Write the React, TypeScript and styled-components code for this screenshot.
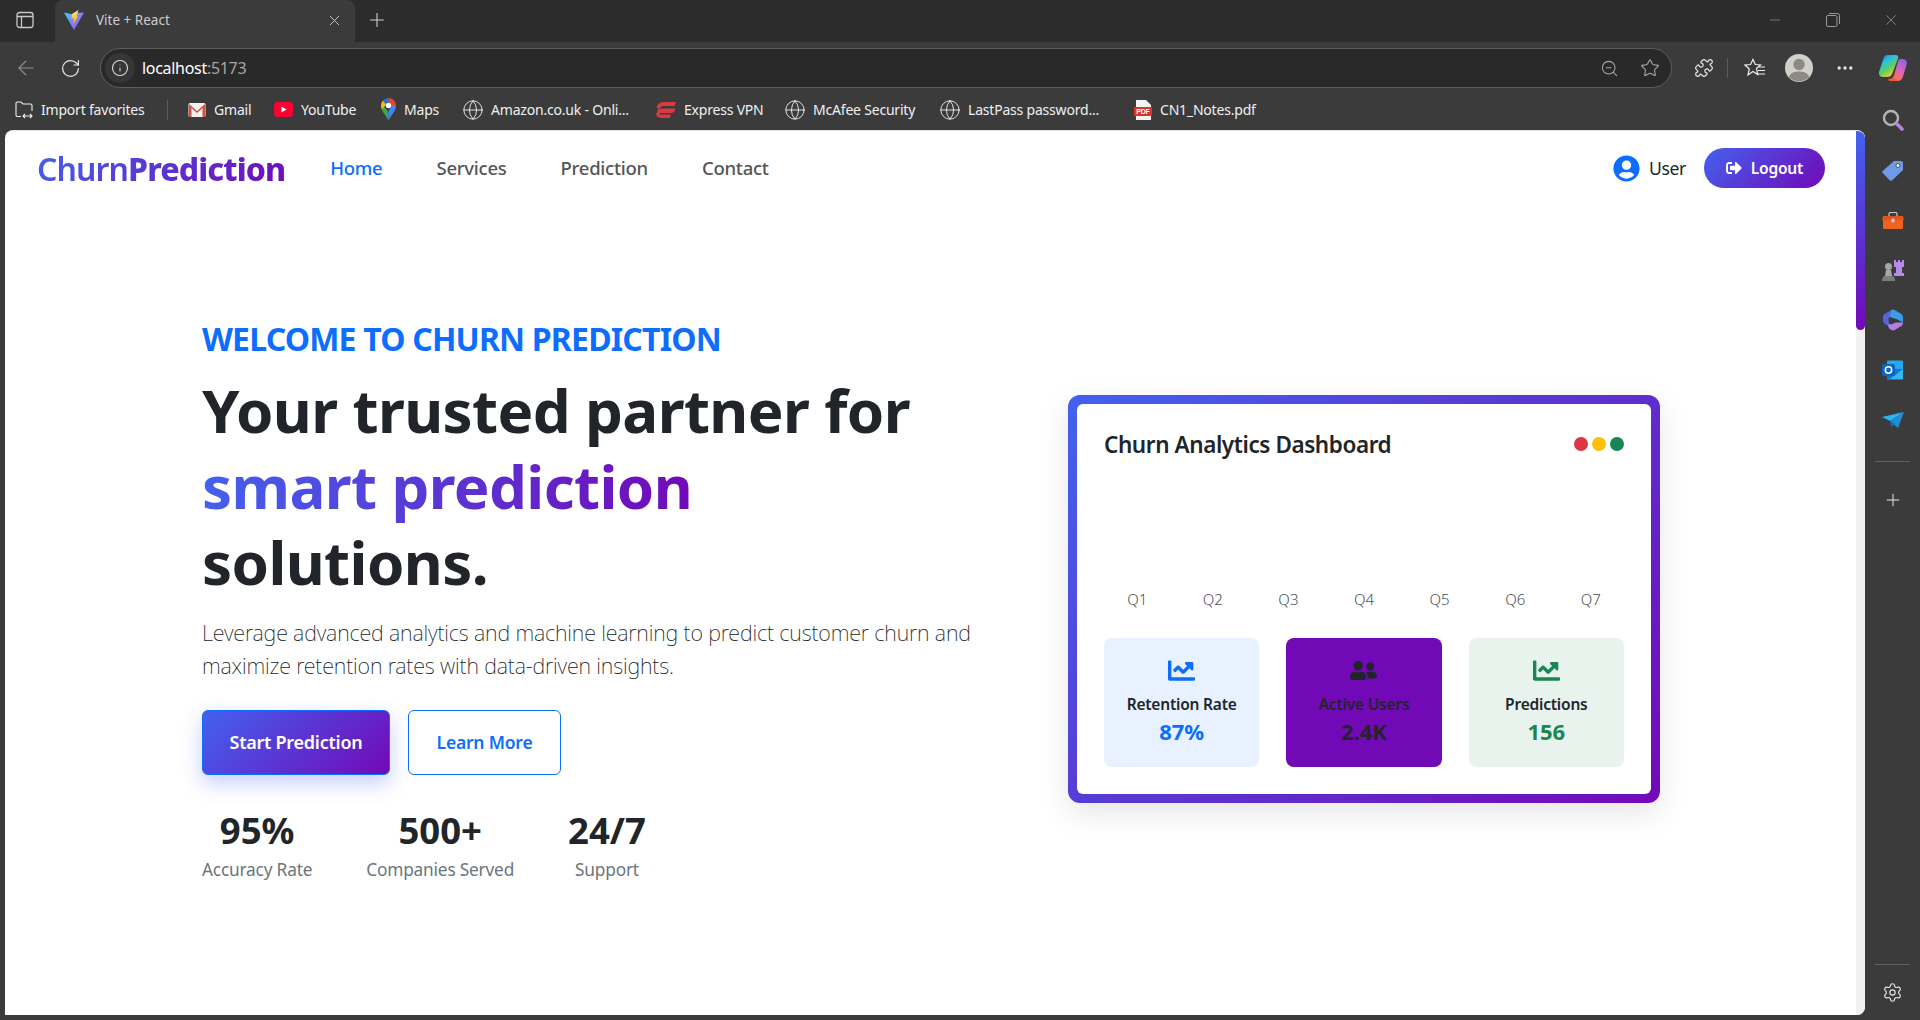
import React, { FC } from "react";
import styled, { createGlobalStyle } from "styled-components";
import {
  ArrowLeft,
  Globe,
  Info,
  Minus,
  MoreHorizontal,
  Plus,
  Puzzle,
  RotateCw,
  Settings,
  Star,
  X,
  ZoomOut,
} from "lucide-react";
import { FaChartLine, FaSignOutAlt, FaUserCircle, FaUserFriends } from "react-icons/fa";

const GRADIENT = "linear-gradient(135deg, #4361ee, #7209b7)";
const FONT = `"Noto Sans", "Open Sans", sans-serif`;

const GlobalStyle = createGlobalStyle`
  html, body {
    margin: 0;
    padding: 0;
    height: 100%;
    background: #3b3b3b;
    font-family: ${FONT};
    overflow: hidden;
  }
  * {
    box-sizing: border-box;
  }
`;

const Browser = styled("div")`
  width: 1920px;
  height: 1020px;
  display: flex;
  flex-direction: column;
  background: #3b3b3b;
`;

const TitleBar = styled("div")`
  height: 42px;
  display: flex;
  align-items: stretch;
  background: #2c2c2c;
  color: #cfcfcf;
`;

const TabToggle = styled("div")`
  width: 55px;
  display: flex;
  align-items: center;
  justify-content: center;
  padding: 0 5px 2px 0;
`;

const Tab = styled("div")`
  width: 300px;
  display: flex;
  align-items: center;
  padding: 0 12px 2px 9px;
  background: #3b3b3b;
  border-radius: 8px 8px 0 0;
  gap: 12px;
`;

const TabTitle = styled("span")`
  flex: 1;
  font-size: 13.5px;
  color: #cccccc;
`;

const NewTab = styled("div")`
  width: 44px;
  display: flex;
  align-items: center;
  justify-content: center;
  padding-bottom: 2px;
`;

const WindowControls = styled("div")`
  margin-left: auto;
  display: flex;
  align-items: center;
  padding-bottom: 2px;
  color: #9a9a9a;
`;

const WindowButton = styled("div")`
  width: 58px;
  display: flex;
  justify-content: center;
`;

const Below = styled("div")`
  flex: 1;
  display: flex;
  min-height: 0;
`;

const MainColumn = styled("div")`
  flex: 1;
  min-width: 0;
  display: flex;
  flex-direction: column;
  padding: 0 0 5px 5px;
`;

const Toolbar = styled("div")`
  height: 48px;
  margin-top: 2px;
  display: flex;
  align-items: center;
  color: #e6e6e6;
`;

const NavIcon = styled("div")<{ $w: number; $dim?: boolean }>`
  width: ${({ $w }) => $w}px;
  flex: none;
  display: flex;
  justify-content: center;
  color: ${({ $dim }) => ($dim ? "#8d8d8d" : "#e6e6e6")};
`;

const Address = styled("div")`
  flex: 1;
  height: 40px;
  margin: 0 22px 0 5px;
  border: 1px solid #5e5e5e;
  border-radius: 20px;
  background: #292929;
  display: flex;
  align-items: center;
  padding: 0 11px 0 4px;
`;

const InfoChip = styled("div")`
  width: 30px;
  height: 30px;
  border-radius: 50%;
  background: #363636;
  display: flex;
  align-items: center;
  justify-content: center;
  color: #dcdcdc;
  margin-right: 7px;
`;

const UrlHost = styled("span")`
  font-size: 16px;
  letter-spacing: -0.3px;
  color: #ffffff;
`;

const UrlPort = styled("span")`
  font-size: 16px;
  letter-spacing: -0.3px;
  color: #a5a5a5;
`;

const AddressEnd = styled("div")`
  margin-left: auto;
  display: flex;
  align-items: center;
  gap: 21px;
  color: #a8a8a8;
`;

const ToolGroup = styled("div")`
  width: 171px;
  flex: none;
  display: flex;
  align-items: center;
`;

const ToolSep = styled("div")`
  width: 1px;
  height: 20px;
  background: #5c5c5c;
  margin: 0 13px;
`;

const Bookmarks = styled("div")`
  height: 38px;
  display: flex;
  align-items: center;
  padding: 0 0 3px 10px;
`;

const Bookmark = styled("div")<{ $w: number }>`
  width: ${({ $w }) => $w}px;
  flex: none;
  display: flex;
  align-items: center;
  gap: 8px;
  font-size: 14px;
  letter-spacing: -0.2px;
  color: #f0f0f0;
  white-space: nowrap;
`;

const BookmarkGlobe = styled(Globe)`
  margin: -2px -1px -2px -2px;
`;

const BookmarkSep = styled("div")`
  width: 1px;
  height: 20px;
  background: #5c5c5c;
  position: relative;
  left: -20px;
`;

const Viewport = styled("div")`
  flex: 1;
  display: flex;
  min-height: 0;
  background: #ffffff;
  border-radius: 8px 8px 8px 0;
  overflow: hidden;
  border-top: 1px solid #e8e8e8;
`;

const Page = styled("div")`
  flex: 1;
  min-width: 0;
  color: #212529;
`;

const ScrollTrack = styled("div")`
  width: 9px;
  background: #f1f1f1;
`;

const ScrollThumb = styled("div")`
  height: 199px;
  border-radius: 0 0 5px 5px;
  background: linear-gradient(180deg, #4361ee, #7209b7);
`;

const NavBar = styled("div")`
  height: 74px;
  display: flex;
  align-items: center;
  padding: 0 31px 0 32px;
`;

const Logo = styled("div")`
  font-size: 32px;
  line-height: 40px;
  letter-spacing: -0.9px;
  background: ${GRADIENT};
  -webkit-background-clip: text;
  background-clip: text;
  -webkit-text-fill-color: transparent;
  font-weight: 600;
  margin: 2px 45px 0 0;
  & b {
    font-weight: 800;
  }
`;

const NavLinks = styled("div")`
  display: flex;
  gap: 54px;
  padding-bottom: 2px;
`;

const NavLink = styled("a")<{ $active?: boolean }>`
  font-size: 18.5px;
  font-weight: 500;
  letter-spacing: -0.25px;
  color: ${({ $active }) => ($active ? "#0d6efd" : "#555555")};
`;

const NavRight = styled("div")`
  margin-left: auto;
  display: flex;
  align-items: center;
`;

const UserBadge = styled("div")`
  display: flex;
  align-items: center;
  gap: 9px;
  font-size: 17.6px;
  letter-spacing: -0.4px;
  color: #212529;
  margin-right: 18px;
  & svg {
    color: #0d6efd;
  }
`;

const LogoutButton = styled("button")`
  width: 121px;
  height: 40px;
  border: 0;
  border-radius: 20px;
  background: ${GRADIENT};
  color: #ffffff;
  font: 600 15.5px ${FONT};
  letter-spacing: -0.2px;
  display: flex;
  align-items: center;
  justify-content: center;
  gap: 9px;
`;

const Hero = styled("section")`
  display: grid;
  grid-template-columns: 866px 592px;
  align-items: center;
  padding: 112px 0 0 197px;
`;

const Eyebrow = styled("div")`
  font-size: 32px;
  line-height: 43px;
  font-weight: 700;
  letter-spacing: -0.82px;
  color: #0d6efd;
  margin: 0 0 12px;
  white-space: nowrap;
`;

const Headline = styled("h1")`
  margin: 0 0 16px;
  font-size: 60px;
  line-height: 76px;
  font-weight: 700;
  letter-spacing: -0.6px;
  color: #212529;
  white-space: nowrap;
`;

const GradientWords = styled("span")`
  background: linear-gradient(90deg, #4361ee, #7209b7);
  -webkit-background-clip: text;
  background-clip: text;
  -webkit-text-fill-color: transparent;
`;

const Lead = styled("p")`
  margin: 0 0 28px;
  font-size: 21.5px;
  line-height: 33px;
  font-weight: 200;
  letter-spacing: -0.16px;
  color: #16191c;
  white-space: nowrap;
`;

const Actions = styled("div")`
  display: flex;
  gap: 18px;
  margin-bottom: 31px;
`;

const PrimaryAction = styled("button")`
  width: 188px;
  height: 65px;
  padding-bottom: 3px;
  border: 1px solid #0d6efd;
  border-radius: 6px;
  background: ${GRADIENT};
  color: #ffffff;
  font: 600 18px ${FONT};
  letter-spacing: -0.25px;
  box-shadow: 0 8px 20px rgba(67, 97, 238, 0.3);
`;

const SecondaryAction = styled("button")`
  width: 153px;
  height: 65px;
  padding-bottom: 3px;
  border: 1px solid #0d6efd;
  border-radius: 6px;
  background: #ffffff;
  color: #0d6efd;
  font: 600 17.5px ${FONT};
  letter-spacing: -0.2px;
`;

const Stats = styled("div")`
  display: flex;
  gap: 54px;
`;

const Stat = styled("div")`
  text-align: center;
`;

const StatNumber = styled("div")`
  font-size: 36.5px;
  line-height: 48px;
  font-weight: 700;
  color: #212529;
`;

const StatLabel = styled("div")`
  margin-top: 4px;
  font-size: 17.3px;
  line-height: 24px;
  letter-spacing: -0.2px;
  color: #6c757d;
`;

const CardFrame = styled("div")`
  height: 408px;
  margin-bottom: 1px;
  padding: 9px;
  border-radius: 12px;
  background: ${GRADIENT};
  box-shadow: 0 10px 30px rgba(0, 0, 0, 0.1);
`;

const Card = styled("div")`
  height: 100%;
  padding: 27px;
  border-radius: 6px;
  background: #ffffff;
  display: flex;
  flex-direction: column;
`;

const CardHeader = styled("div")`
  height: 26px;
  display: flex;
  align-items: center;
  justify-content: space-between;
`;

const CardTitle = styled("div")`
  font-size: 22.5px;
  font-weight: 600;
  letter-spacing: -0.42px;
  color: #212529;
`;

const Dots = styled("div")`
  display: flex;
  gap: 4px;
  padding-bottom: 1px;
`;

const Dot = styled("span")<{ $color: string }>`
  width: 14px;
  height: 14px;
  border-radius: 50%;
  background: ${({ $color }) => $color};
`;

const Quarters = styled("div")`
  margin-top: 132px;
  height: 20px;
  display: grid;
  grid-template-columns: repeat(7, 50px);
  column-gap: 25.6px;
  justify-content: center;
`;

const Quarter = styled("span")`
  text-align: center;
  font-size: 15px;
  line-height: 20px;
  font-weight: 300;
  color: #495057;
`;

const Tiles = styled("div")`
  margin-top: 29px;
  display: grid;
  grid-template-columns: repeat(3, 1fr);
  gap: 27px;
`;

const Tile = styled("div")<{ $bg: string; $accent: string }>`
  height: 129px;
  padding-top: 19px;
  border-radius: 8px;
  background: ${({ $bg }) => $bg};
  text-align: center;
  & svg {
    display: block;
    margin: 0 auto;
    color: ${({ $accent }) => $accent};
  }
`;

const TileLabel = styled("div")`
  margin-top: 10px;
  font-size: 15.5px;
  line-height: 20px;
  font-weight: 600;
  letter-spacing: -0.2px;
  color: #212529;
`;

const TileValue = styled("div")<{ $accent: string }>`
  margin-top: 2px;
  font-size: 22px;
  line-height: 30px;
  font-weight: 700;
  color: ${({ $accent }) => $accent};
`;

const SideBar = styled("div")`
  width: 55px;
  flex: none;
  display: flex;
  flex-direction: column;
  align-items: center;
  padding: 1px 0 5px;
  color: #e6e6e6;
`;

const SideSlot = styled("div")`
  height: 50px;
  width: 100%;
  flex: none;
  display: flex;
  align-items: center;
  justify-content: center;
  &:first-child {
    height: 52px;
    padding-bottom: 2px;
  }
`;

const SideRule = styled("div")<{ $after: number }>`
  width: 35px;
  height: 1px;
  background: #5f5f5f;
  margin: 16px 0 ${({ $after }) => $after}px;
`;

const SideBottom = styled("div")`
  margin-top: auto;
  width: 100%;
  display: flex;
  flex-direction: column;
  align-items: center;
  padding-bottom: 12px;
`;

const TabPanelIcon = () => (
  <svg width="18" height="18" viewBox="0 0 18 18" fill="none" stroke="#c9c9c9" strokeWidth="1.3">
    <rect x="1" y="1.5" width="16" height="15" rx="2.5" />
    <path d="M1 5.5h16M5.5 5.5v11" />
  </svg>
);

const ViteIcon = () => (
  <svg width="20" height="20" viewBox="0 0 20 20">
    <defs>
      <linearGradient id="viteA" x1="0" y1="0" x2="1" y2="1">
        <stop offset="0" stopColor="#41d1ff" />
        <stop offset="1" stopColor="#bd34fe" />
      </linearGradient>
      <linearGradient id="viteB" x1="0" y1="0" x2="0" y2="1">
        <stop offset="0" stopColor="#ffea83" />
        <stop offset="1" stopColor="#ffa800" />
      </linearGradient>
    </defs>
    <path d="M0 2.5 L7 4 L13 3 L20 2.5 L10 20 Z" fill="url(#viteA)" />
    <path d="M8 4 L14.5 0 L12.5 6.5 L14 6.5 L9 14.5 L10 8.5 L7.5 8.5 Z" fill="url(#viteB)" />
  </svg>
);

const RestoreIcon = () => (
  <svg width="14" height="14" viewBox="0 0 14 14" fill="none" stroke="currentColor">
    <rect x="0.5" y="2.5" width="10.5" height="11" rx="1.5" />
    <path d="M3 .5h8.5a2 2 0 0 1 2 2V11" />
  </svg>
);

const ImportIcon = () => (
  <svg width="18" height="18" viewBox="0 0 18 18" fill="none" stroke="#eeeeee" strokeWidth="1.1">
    <path d="M6 15.5H2.5a1.5 1.5 0 0 1-1.5-1.5V2.5A1.5 1.5 0 0 1 2.5 1H6l2 2h7.5A1.5 1.5 0 0 1 17 4.5V10" />
    <path d="M8 15h9M10 13l-2 2 2 2M15 13l2 2-2 2" />
  </svg>
);

const GmailIcon = () => (
  <svg width="18" height="16" viewBox="0 0 18 16">
    <rect x="0.5" y="1" width="17" height="14" rx="1.5" fill="#f1f1f1" />
    <path d="M1 2 L9 9 L17 2 V15 H14.5 V6 L9 11 L3.5 6 V15 H1 Z" fill="#d5503f" />
  </svg>
);

const YouTubeIcon = () => (
  <svg width="19" height="15" viewBox="0 0 19 15">
    <rect width="19" height="15" rx="3.5" fill="#ff0033" />
    <path d="M7.5 4.5 L12.5 7.5 L7.5 10.5 Z" fill="#ffffff" />
  </svg>
);

const MapsIcon = () => (
  <svg width="15" height="24" viewBox="0 0 15 24">
    <path d="M7.5 23 C6 18 0 14 0 7.5 L3.5 9 L7.5 14 Z" fill="#34a853" />
    <path d="M7.5 23 C9 18 15 14 15 7.5 L11 6 L7.5 14 Z" fill="#4285f4" />
    <path d="M2 2.5 A7.5 7.5 0 0 1 7.5 0 L8 4 L4.5 7.5 Z" fill="#1a73e8" />
    <path d="M7.5 0 A7.5 7.5 0 0 1 15 7.5 L10.5 7 L7.5 3.5 Z" fill="#ea4335" />
    <path d="M2 2.5 A7.5 7.5 0 0 0 0 7.5 C0 9 .5 10 1 11 L5 7 Z" fill="#fbbc04" />
    <circle cx="7.5" cy="7.5" r="2.7" fill="#ffffff" />
  </svg>
);

const ExpressIcon = () => (
  <svg width="20" height="16" viewBox="0 0 20 16" fill="#da3940">
    <path d="M7 0h13l-1.500 4H7C5.500 4 4.500 5 4 6H.5C1 3 4 0 7 0Z" />
    <path d="M2 6.500h17c.5 2.500-1.500 4.500-4 4.500H1Z" />
    <path d="M.2 11h3.600c-.3 1 .2 1.500 1.700 1.500H15L13.700 16H5C1.500 16-.3 13.500.2 11Z" />
  </svg>
);

const PdfIcon = () => (
  <svg width="18" height="20" viewBox="0 0 18 20">
    <path d="M2 0h10l5 5v15H2Z" fill="#f4f4f4" />
    <rect y="7" width="18" height="9" fill="#d9352c" />
    <text x="9" y="14.200" fontSize="7" fontWeight="700" fontFamily="Liberation Sans" fill="#ffffff" textAnchor="middle">
      PDF
    </text>
  </svg>
);

const FavoritesIcon = () => (
  <svg width="21" height="20" viewBox="0 0 21 20" fill="none" stroke="#f0f0f0" strokeWidth="1.2">
    <path d="M9 1.500 L11.300 6.500 L16.500 7 L12.500 10.500 L13.700 16.500 L9 13.500 L4 17 L5.300 11 L1 7 L6.500 6.500 Z" />
    <path d="M15 9h6M14 12.500h7M13 16h8" />
  </svg>
);

const AvatarIcon = () => (
  <svg width="28" height="28" viewBox="0 0 28 28">
    <circle cx="14" cy="14" r="14" fill="#d2d0cb" />
    <circle cx="14" cy="10.500" r="5.700" fill="#8c8a85" />
    <path d="M3.800 23 C6 18 10 17.500 14 17.500 C18 17.500 22 18 24.200 23 A14 14 0 0 1 3.800 23Z" fill="#8c8a85" />
  </svg>
);

const CopilotIcon = () => (
  <svg width="28" height="26" viewBox="0 0 28 26">
    <defs>
      <linearGradient id="copA" x1="0.15" y1="0" x2="0.75" y2="1">
        <stop offset="0" stopColor="#2a7bf0" />
        <stop offset="0.3" stopColor="#27c0e0" />
        <stop offset="0.6" stopColor="#5ed060" />
        <stop offset="0.9" stopColor="#f4c83a" />
      </linearGradient>
      <linearGradient id="copB" x1="0.85" y1="0" x2="0.25" y2="1">
        <stop offset="0" stopColor="#8a5fe6" />
        <stop offset="0.45" stopColor="#d964c0" />
        <stop offset="0.8" stopColor="#f4706a" />
        <stop offset="1" stopColor="#f4531f" />
      </linearGradient>
    </defs>
    <path d="M8.500 0h8c2.500 0 3.200 1.500 2.500 3.500L13.500 18c-1 2.500-2.500 4-5 4H4C1 22-.7 19.500.2 16.500L4.500 3.500C5.200 1.300 6.500 0 8.500 0Z" fill="url(#copA)" />
    <path d="M21 4h2.500c3 0 5 2 4.300 5l-3.800 12.500C23.200 24.500 21 26 18.500 26H11c-1.500 0-2.300-1-1.500-2 2.500 0 4.500-1 5.500-3.500L18.800 7C19.300 5 20 4 21 4Z" fill="url(#copB)" />
  </svg>
);

const SideSearch = () => (
  <svg width="22" height="22" viewBox="0 0 22 22" fill="none">
    <circle cx="9" cy="9" r="7" stroke="#b4b4b4" strokeWidth="2.4" />
    <path d="M15 15l5 5" stroke="#b184e0" strokeWidth="3.600" strokeLinecap="round" />
  </svg>
);

const SideTag = () => (
  <svg width="21" height="21" viewBox="0 0 21 21">
    <path d="M12 1h7a2 2 0 0 1 2 2v7L10 20.500a1.500 1.500 0 0 1-2 0L.7 13a1.500 1.500 0 0 1 0-2Z" fill="#6e9be8" />
    <circle cx="16" cy="5.500" r="2" fill="#f0f0f0" stroke="#555" />
  </svg>
);

const SideToolbox = () => (
  <svg width="22" height="17" viewBox="0 0 22 17">
    <path d="M7 4V2a1.500 1.500 0 0 1 1.500-1.500h5A1.500 1.500 0 0 1 15 2v2" fill="none" stroke="#c9c9c9" strokeWidth="1.2" />
    <path d="M1 4h20l1 4H0Z" fill="#e0541f" />
    <path d="M1 8h20v7.500a1.500 1.500 0 0 1-1.500 1.500h-17A1.500 1.500 0 0 1 1 15.500Z" fill="#f2621f" />
    <rect x="9.500" y="6.500" width="3" height="4" rx="1" fill="#cfcfcf" />
  </svg>
);

const SideChess = () => (
  <svg width="23" height="23" viewBox="0 0 23 23">
    <path d="M13 1h2v2h2V1h2v2h2V1h2v7h-2v6h2v3H13v-3h2V8h-2Z" fill="#b68ae6" />
    <circle cx="7.500" cy="7.500" r="3.500" fill="#a6a6a6" />
    <path d="M5 11h5l1 6H4Z" fill="#a6a6a6" />
    <path d="M1 22c0-3 1-5 3-5h7c2 0 3 2 3 5Z" fill="#7d7d7d" />
  </svg>
);

const SideOffice = () => (
  <svg width="20" height="22" viewBox="0 0 20 22">
    <path d="M8 1.200c1.300-.8 2.700-.8 4 0l6 3.500c1.300.8 2 2 2 3.300v5.500L13 9.800 5.500 9.200Z" fill="#3a9be6" />
    <path d="M2 4.800 8 1.200c1 .2-1 3-1.500 5L5.500 9.200 6 15l2 3.500-6-3.600C.7 14 0 12.900 0 11.500V8C0 6.700.700 5.500 2 4.800Z" fill="#5b62dc" />
    <path d="M6 15c2 .7 4 .2 6.500-1.500L20 13.500V14c0 1.300-.7 2.500-2 3.300l-6 3.500c-1.300.8-2.700.8-4 0l-2-1.300-1-3Z" fill="#b07fe2" />
    <path d="M6.500 7.500 14 11l-7.500 4Z" fill="#3b3b3b" />
  </svg>
);

const SideOutlook = () => (
  <svg width="21" height="20" viewBox="0 0 21 20">
    <rect x="5" y="0.500" width="16" height="10" rx="1" fill="#28a8ea" />
    <path d="M5 9h16v10a1 1 0 0 1-1 1H6a1 1 0 0 1-1-1Z" fill="#0f78d4" />
    <path d="M21 9v10H8Z" fill="#35b8f1" />
    <rect x="0" y="4" width="13" height="12" rx="1.500" fill="#0a64c2" />
    <circle cx="6.500" cy="10" r="3.200" fill="none" stroke="#ffffff" strokeWidth="1.500" />
  </svg>
);

const SideSend = () => (
  <svg width="22" height="16" viewBox="0 0 22 16">
    <path d="M0 5 22 0 8 9Z" fill="#29b6f2" />
    <path d="M22 0 8 9 16 16Z" fill="#1c8fd8" />
    <path d="M8 9l1 6 4-3Z" fill="#0f6cb8" />
  </svg>
);

const globe = <BookmarkGlobe size={22} strokeWidth={1} />;

const bookmarks: { label: string; w: number; icon: React.ReactNode }[] = [
  { label: "Gmail", w: 86, icon: <GmailIcon /> },
  { label: "YouTube", w: 107, icon: <YouTubeIcon /> },
  { label: "Maps", w: 83, icon: <MapsIcon /> },
  { label: "Amazon.co.uk - Onli...", w: 192, icon: globe },
  { label: "Express VPN", w: 130, icon: <ExpressIcon /> },
  { label: "McAfee Security", w: 155, icon: globe },
  { label: "LastPass password...", w: 193, icon: globe },
  { label: "CN1_Notes.pdf", w: 130, icon: <PdfIcon /> },
];

const quarters = ["Q1", "Q2", "Q3", "Q4", "Q5", "Q6", "Q7"];

const stats = [
  { value: "95%", label: "Accuracy Rate" },
  { value: "500+", label: "Companies Served" },
  { value: "24/7", label: "Support" },
];

const sideIcons = [
  <CopilotIcon key="copilot" />,
  <SideSearch key="search" />,
  <SideTag key="tag" />,
  <SideToolbox key="toolbox" />,
  <SideChess key="chess" />,
  <SideOffice key="office" />,
  <SideOutlook key="outlook" />,
  <SideSend key="send" />,
];

const BrowserChrome: FC = () => (
  <TitleBar>
    <TabToggle>
      <TabPanelIcon />
    </TabToggle>
    <Tab>
      <ViteIcon />
      <TabTitle>Vite + React</TabTitle>
      <X size={17} strokeWidth={1.3} />
    </Tab>
    <NewTab>
      <Plus size={22} strokeWidth={1.2} />
    </NewTab>
    <WindowControls>
      <WindowButton>
        <Minus size={16} strokeWidth={1} />
      </WindowButton>
      <WindowButton>
        <RestoreIcon />
      </WindowButton>
      <WindowButton>
        <X size={18} strokeWidth={1} />
      </WindowButton>
    </WindowControls>
  </TitleBar>
);

const App: FC = () => (
  <>
    <GlobalStyle />
    <Browser>
      <BrowserChrome />
      <Below>
        <MainColumn>
          <Toolbar>
            <NavIcon $w={41} $dim>
              <ArrowLeft size={24} strokeWidth={1.1} />
            </NavIcon>
            <NavIcon $w={49}>
              <RotateCw size={21} strokeWidth={1.4} />
            </NavIcon>
            <Address>
              <InfoChip>
                <Info size={18} strokeWidth={1.4} />
              </InfoChip>
              <UrlHost>localhost</UrlHost>
              <UrlPort>:5173</UrlPort>
              <AddressEnd>
                <ZoomOut size={19} strokeWidth={1.3} />
                <Star size={20} strokeWidth={1.3} />
              </AddressEnd>
            </Address>
            <ToolGroup>
              <NavIcon $w={20}>
                <Puzzle size={20} strokeWidth={1.5} />
              </NavIcon>
              <ToolSep />
              <NavIcon $w={26}>
                <FavoritesIcon />
              </NavIcon>
              <NavIcon $w={63}>
                <AvatarIcon />
              </NavIcon>
              <NavIcon $w={30}>
                <MoreHorizontal size={20} strokeWidth={2} />
              </NavIcon>
            </ToolGroup>
          </Toolbar>
          <Bookmarks>
            <Bookmark $w={172}>
              <ImportIcon />
              Import favorites
            </Bookmark>
            <BookmarkSep />
            {bookmarks.map((b) => (
              <Bookmark key={b.label} $w={b.w}>
                {b.icon}
                {b.label}
              </Bookmark>
            ))}
          </Bookmarks>
          <Viewport>
            <Page>
              <NavBar>
                <Logo>
                  Churn<b>Prediction</b>
                </Logo>
                <NavLinks>
                  <NavLink $active>Home</NavLink>
                  <NavLink>Services</NavLink>
                  <NavLink>Prediction</NavLink>
                  <NavLink>Contact</NavLink>
                </NavLinks>
                <NavRight>
                  <UserBadge>
                    <FaUserCircle size={27} />
                    User
                  </UserBadge>
                  <LogoutButton>
                    <FaSignOutAlt size={16} />
                    Logout
                  </LogoutButton>
                </NavRight>
              </NavBar>
              <Hero>
                <div>
                  <Eyebrow>WELCOME TO CHURN PREDICTION</Eyebrow>
                  <Headline>
                    Your trusted partner for
                    <br />
                    <GradientWords>smart prediction</GradientWords>
                    <br />
                    solutions.
                  </Headline>
                  <Lead>
                    Leverage advanced analytics and machine learning to predict customer churn and
                    <br />
                    maximize retention rates with data-driven insights.
                  </Lead>
                  <Actions>
                    <PrimaryAction>Start Prediction</PrimaryAction>
                    <SecondaryAction>Learn More</SecondaryAction>
                  </Actions>
                  <Stats>
                    {stats.map((s) => (
                      <Stat key={s.label}>
                        <StatNumber>{s.value}</StatNumber>
                        <StatLabel>{s.label}</StatLabel>
                      </Stat>
                    ))}
                  </Stats>
                </div>
                <CardFrame>
                  <Card>
                    <CardHeader>
                      <CardTitle>Churn Analytics Dashboard</CardTitle>
                      <Dots>
                        <Dot $color="#dc3545" />
                        <Dot $color="#ffc107" />
                        <Dot $color="#198754" />
                      </Dots>
                    </CardHeader>
                    <Quarters>
                      {quarters.map((q) => (
                        <Quarter key={q}>{q}</Quarter>
                      ))}
                    </Quarters>
                    <Tiles>
                      <Tile $bg="#e7f1ff" $accent="#0d6efd">
                        <FaChartLine size={27} />
                        <TileLabel>Retention Rate</TileLabel>
                        <TileValue $accent="#0d6efd">87%</TileValue>
                      </Tile>
                      <Tile $bg="#7209b7" $accent="#212529">
                        <FaUserFriends size={27} />
                        <TileLabel>Active Users</TileLabel>
                        <TileValue $accent="#212529">2.4K</TileValue>
                      </Tile>
                      <Tile $bg="#e8f3ee" $accent="#198754">
                        <FaChartLine size={27} />
                        <TileLabel>Predictions</TileLabel>
                        <TileValue $accent="#198754">156</TileValue>
                      </Tile>
                    </Tiles>
                  </Card>
                </CardFrame>
              </Hero>
            </Page>
            <ScrollTrack>
              <ScrollThumb />
            </ScrollTrack>
          </Viewport>
        </MainColumn>
        <SideBar>
          {sideIcons.map((icon) => (
            <SideSlot key={icon.key}>{icon}</SideSlot>
          ))}
          <SideRule $after={28} />
          <Plus size={20} strokeWidth={1.2} />
          <SideBottom>
            <SideRule $after={17} />
            <Settings size={21} strokeWidth={1.3} />
          </SideBottom>
        </SideBar>
      </Below>
    </Browser>
  </>
);

export default App;
